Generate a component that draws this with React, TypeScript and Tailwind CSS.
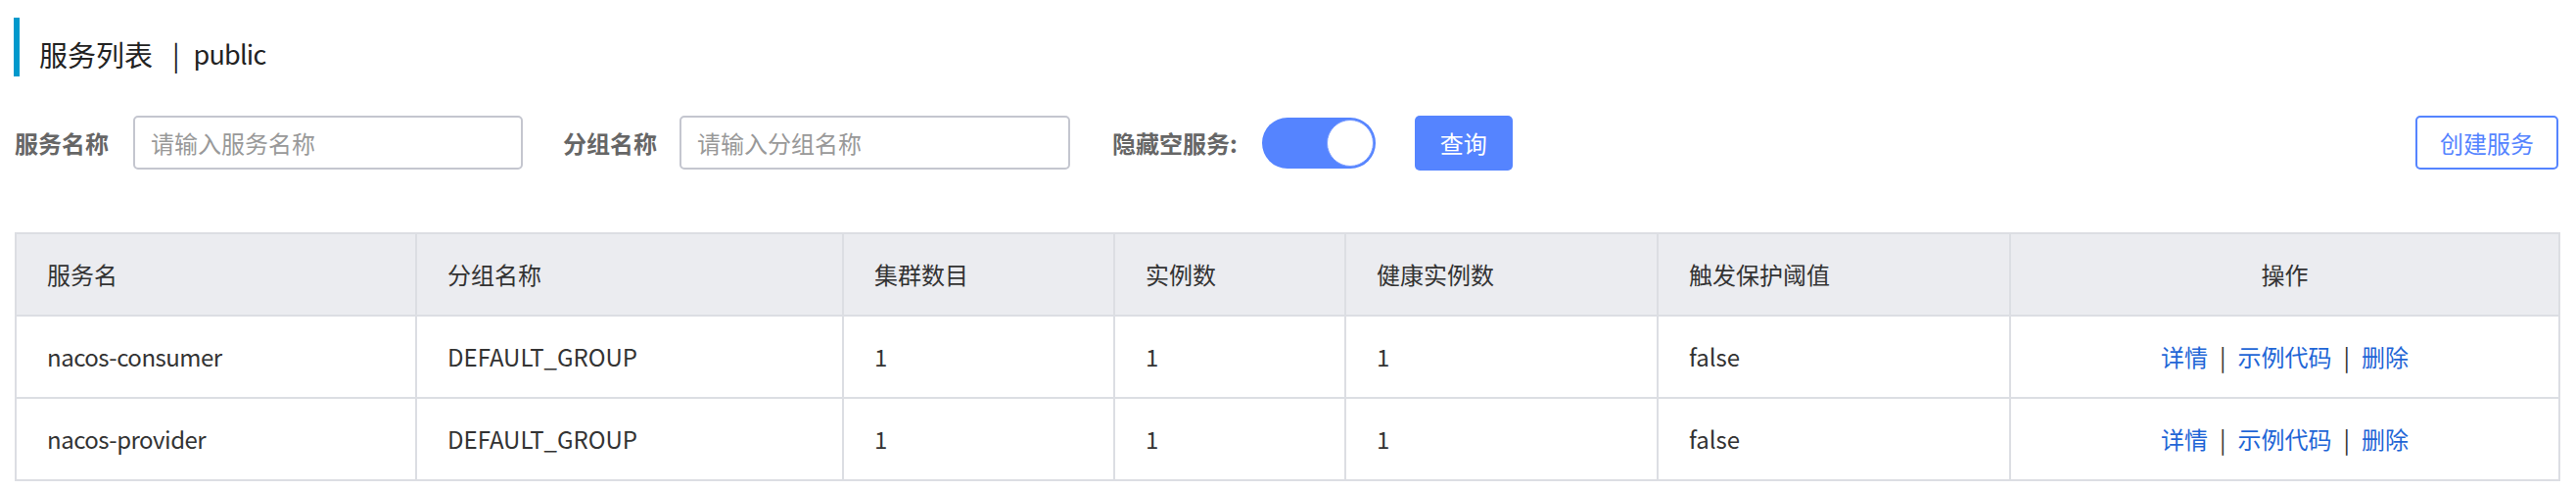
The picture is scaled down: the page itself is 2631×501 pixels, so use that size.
import React from "react";

const font = { fontFamily: '"Noto Sans CJK SC", "Noto Sans", sans-serif' };

const cols = [409, 436, 277, 236, 319, 360, 561];
const headers = ["服务名", "分组名称", "集群数目", "实例数", "健康实例数", "触发保护阈值", "操作"];
const rows = [
  ["nacos-consumer", "DEFAULT_GROUP", "1", "1", "1", "false"],
  ["nacos-provider", "DEFAULT_GROUP", "1", "1", "1", "false"],
];

export default function App() {
  return (
    <div
      className="w-[2631px] h-[501px] bg-white pl-[15px] pr-[18px] pt-[18px] text-[#333]"
      style={font}
    >
      {/* Title */}
      <div className="-ml-px h-[60px] border-l-[6px] border-[#0099cc] pl-[20px] pt-[23px]">
        <div className="flex items-center text-[28px] leading-[28px] text-[#222]">
          <span className="text-[29px]">服务列表</span>
          <span className="ml-[20px]">|</span>
          <span className="ml-[14px] text-[27px] tracking-[-0.8px]">public</span>
        </div>
      </div>

      {/* Form row */}
      <div className="mt-[40px] flex items-center h-[55px]">
        <span className="text-[24px] font-bold text-[#666] leading-none">服务名称</span>
        <div className="ml-[25px] w-[398px] h-[55px] rounded-[5px] border-2 border-[#c4c6cf] flex items-center pl-[16px] text-[24px] text-[#999]">
          请输入服务名称
        </div>
        <span className="ml-[41px] text-[24px] font-bold text-[#666] leading-none">分组名称</span>
        <div className="ml-[23px] w-[399px] h-[55px] rounded-[5px] border-2 border-[#c4c6cf] flex items-center pl-[16px] text-[24px] text-[#999]">
          请输入分组名称
        </div>
        <span className="ml-[43px] text-[24px] font-bold text-[#666] leading-none">隐藏空服务:</span>
        <div className="ml-[25px] w-[116px] h-[52px] rounded-full bg-[#5584ff] flex items-center justify-end pr-[2px]">
          <div className="w-[48px] h-[48px] rounded-full bg-white border border-[#7a9dff]" />
        </div>
        <div className="ml-[40px] w-[100px] h-[56px] rounded-[5px] bg-[#5584ff] flex items-center justify-center text-[24px] text-white">
          查询
        </div>
        <div className="ml-auto w-[146px] h-[55px] rounded-[5px] border-2 border-[#5584ff] flex items-center justify-center text-[24px] text-[#5584ff]">
          创建服务
        </div>
      </div>

      {/* Table */}
      <table className="mt-[64px] table-fixed border-collapse w-[2598px] text-[24px] text-[#333]">
        <colgroup>
          {cols.map((w, i) => (
            <col key={i} style={{ width: w }} />
          ))}
        </colgroup>
        <thead>
          <tr className="h-[84px] bg-[#ebecf0]">
            {headers.map((h, i) => (
              <th
                key={i}
                className={`border-2 border-[#dcdee3] font-normal px-[31px] ${i === 6 ? "text-center" : "text-left"}`}
              >
                {h}
              </th>
            ))}
          </tr>
        </thead>
        <tbody>
          {rows.map((r, ri) => (
            <tr key={ri} className="h-[84px]">
              {r.map((c, ci) => (
                <td
                  key={ci}
                  className={`border-2 border-[#dcdee3] px-[31px] text-left ${ci === 0 ? "tracking-[-0.5px]" : ""}`}
                >
                  {c}
                </td>
              ))}
              <td className="border-2 border-[#dcdee3] px-[31px] text-center">
                <span className="text-[#1f66d6]">详情</span>
                <span className="mx-[12px] text-[#333]">|</span>
                <span className="text-[#1f66d6]">示例代码</span>
                <span className="mx-[12px] text-[#333]">|</span>
                <span className="text-[#1f66d6]">删除</span>
              </td>
            </tr>
          ))}
        </tbody>
      </table>
    </div>
  );
}
